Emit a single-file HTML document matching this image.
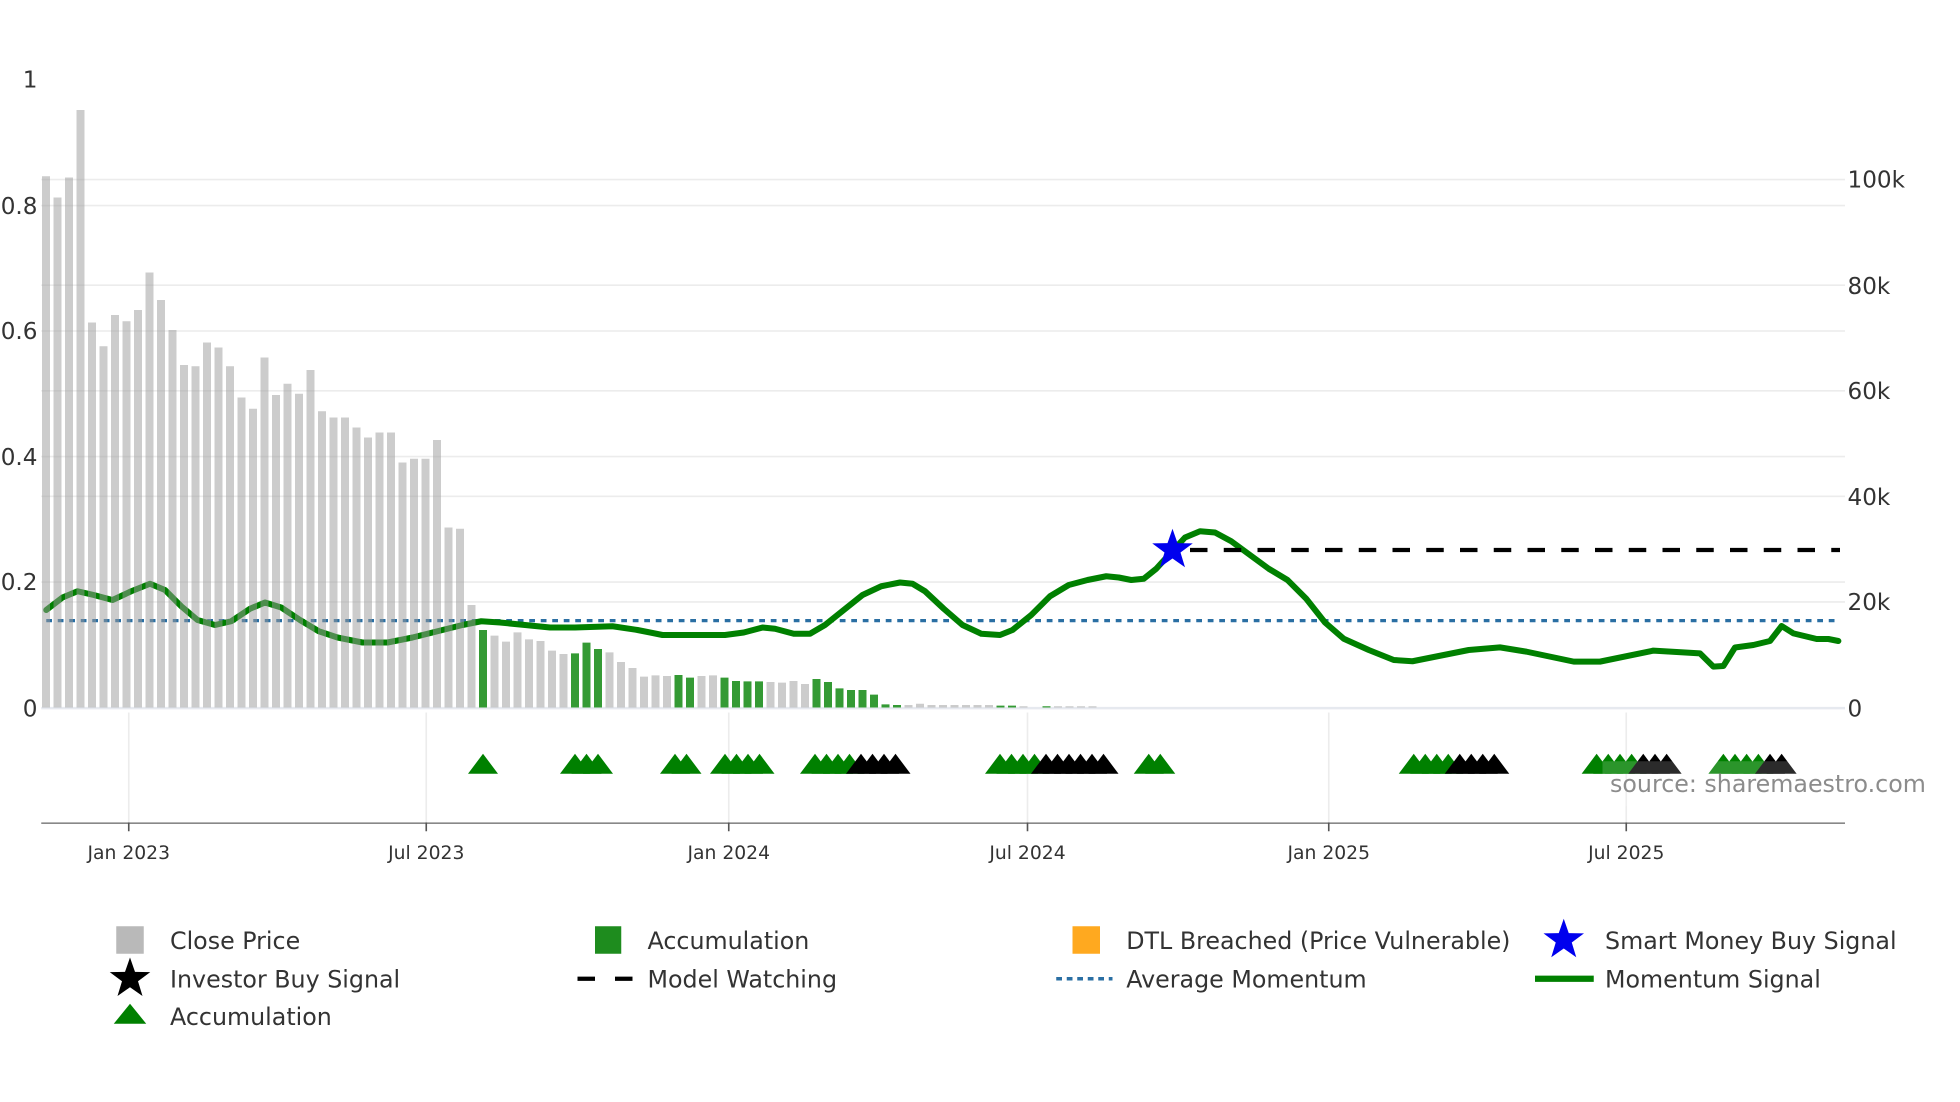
<!DOCTYPE html>
<html><head><meta charset="utf-8"><style>
html,body{margin:0;padding:0;background:#fff;width:1960px;height:1102px;overflow:hidden}
svg{display:block}
text{font-family:"DejaVu Sans","Liberation Sans",sans-serif}
</style></head><body>
<svg width="1960" height="1102" viewBox="0 0 1568 881.6" xmlns="http://www.w3.org/2000/svg">
<defs>
<polygon id="tg" points="0,-8 -12,8 12,8" fill="#008000"/>
<polygon id="tb" points="0,-8 -12,8 12,8" fill="#000"/>
</defs>
<g stroke="#ececec" stroke-width="1.3">
<line x1="33" y1="143.6" x2="1476" y2="143.6"/><line x1="33" y1="228.1" x2="1476" y2="228.1"/><line x1="33" y1="312.6" x2="1476" y2="312.6"/><line x1="33" y1="397" x2="1476" y2="397"/><line x1="33" y1="481.5" x2="1476" y2="481.5"/>
<line x1="33" y1="164.4" x2="1476" y2="164.4"/><line x1="33" y1="264.8" x2="1476" y2="264.8"/><line x1="33" y1="365.2" x2="1476" y2="365.2"/><line x1="33" y1="465.6" x2="1476" y2="465.6"/>
<line x1="103" y1="570" x2="103" y2="658"/><line x1="341" y1="570" x2="341" y2="658"/><line x1="583" y1="570" x2="583" y2="658"/><line x1="822" y1="570" x2="822" y2="658"/><line x1="1063" y1="570" x2="1063" y2="658"/><line x1="1301" y1="570" x2="1301" y2="658"/>
</g>
<line x1="33" y1="566.5" x2="1476" y2="566.5" stroke="#e6e9ef" stroke-width="2"/>
<line x1="37" y1="496.5" x2="1470" y2="496.5" stroke="#2a6fa3" stroke-width="2.6" stroke-dasharray="4.6,4.6"/>
<polyline fill="none" stroke="#008000" stroke-width="4.8" stroke-linejoin="round" stroke-linecap="round" points="37,488 50,478 62,473 75,476 90,480 105,473 120,467 132,472 145,485 158,496 172,500 185,497 200,487 212,482 225,486 240,496 255,505 270,510 290,514 310,514 330,510 350,505 370,500 385,497 400,498 420,500 440,502 460,502 490,501 510,504 530,508 560,508 580,508 595,506 610,502 620,503 635,507 648,507 660,500 675,488 690,476 705,469 720,466 730,467 740,473 755,487 770,500 785,507 800,508 810,504 825,492 840,477 855,468 870,464 885,461 895,462 905,464 915,463 925,455 935,444 948,430 960,425 972,426 985,433 1000,444 1015,455 1030,464 1045,479 1060,498 1075,511 1095,520 1115,528 1130,529 1150,525 1175,520 1200,517.9 1221,521.3 1259,529.3 1280,529.3 1322.7,520.5 1360,522.7 1370.7,533.3 1378.7,532.8 1388,518 1402.7,516 1416,512.8 1425.3,500.8 1434.7,506.7 1453.3,511.2 1462.7,511.2 1470.7,512.8"/>
<g fill="#999" fill-opacity="0.5">
<rect x="33.6" y="141" width="6.4" height="425"/><rect x="42.8" y="158" width="6.4" height="408"/><rect x="52" y="142" width="6.4" height="424"/><rect x="61.2" y="88" width="6.4" height="478"/><rect x="70.4" y="258" width="6.4" height="308"/><rect x="79.6" y="277" width="6.4" height="289"/><rect x="88.8" y="252" width="6.4" height="314"/><rect x="98" y="257" width="6.4" height="309"/><rect x="107.2" y="248" width="6.4" height="318"/><rect x="116.4" y="218" width="6.4" height="348"/><rect x="125.6" y="240" width="6.4" height="326"/><rect x="134.8" y="264" width="6.4" height="302"/><rect x="144" y="292" width="6.4" height="274"/><rect x="153.2" y="293" width="6.4" height="273"/><rect x="162.4" y="274" width="6.4" height="292"/><rect x="171.6" y="278" width="6.4" height="288"/><rect x="180.8" y="293" width="6.4" height="273"/><rect x="190" y="318" width="6.4" height="248"/><rect x="199.2" y="327" width="6.4" height="239"/><rect x="208.4" y="286" width="6.4" height="280"/><rect x="217.6" y="316" width="6.4" height="250"/><rect x="226.8" y="307" width="6.4" height="259"/><rect x="236" y="315" width="6.4" height="251"/><rect x="245.2" y="296" width="6.4" height="270"/><rect x="254.4" y="329" width="6.4" height="237"/><rect x="263.6" y="334" width="6.4" height="232"/><rect x="272.8" y="334" width="6.4" height="232"/><rect x="282" y="342" width="6.4" height="224"/><rect x="291.2" y="350" width="6.4" height="216"/><rect x="300.4" y="346" width="6.4" height="220"/><rect x="309.6" y="346" width="6.4" height="220"/><rect x="318.8" y="370" width="6.4" height="196"/><rect x="328" y="367" width="6.4" height="199"/><rect x="337.2" y="367" width="6.4" height="199"/><rect x="346.4" y="352" width="6.4" height="214"/><rect x="355.6" y="422" width="6.4" height="144"/><rect x="364.8" y="423" width="6.4" height="143"/><rect x="374" y="484" width="6.4" height="82"/>
<rect x="392.4" y="508.5" width="6.4" height="57.5"/><rect x="401.6" y="513.3" width="6.4" height="52.7"/><rect x="410.8" y="505.9" width="6.4" height="60.1"/><rect x="420" y="511.5" width="6.4" height="54.5"/><rect x="429.2" y="512.8" width="6.4" height="53.2"/><rect x="438.4" y="520.5" width="6.4" height="45.5"/><rect x="447.6" y="523.2" width="6.4" height="42.8"/>
<rect x="484.4" y="521.9" width="6.4" height="44.1"/><rect x="493.6" y="529.6" width="6.4" height="36.4"/><rect x="502.8" y="534.4" width="6.4" height="31.6"/><rect x="512" y="541.3" width="6.4" height="24.7"/><rect x="521.2" y="540.3" width="6.4" height="25.7"/><rect x="530.4" y="540.8" width="6.4" height="25.2"/>
<rect x="558" y="540.8" width="6.4" height="25.2"/><rect x="567.2" y="540.3" width="6.4" height="25.7"/>
<rect x="613.2" y="545.6" width="6.4" height="20.4"/><rect x="622.4" y="546.1" width="6.4" height="19.9"/><rect x="631.6" y="544.8" width="6.4" height="21.2"/><rect x="640.8" y="547.2" width="6.4" height="18.8"/>
<rect x="723.6" y="564" width="6.4" height="2"/><rect x="732.8" y="563" width="6.4" height="3"/><rect x="742" y="564" width="6.4" height="2"/><rect x="751.2" y="564" width="6.4" height="2"/><rect x="760.4" y="564" width="6.4" height="2"/><rect x="769.6" y="564" width="6.4" height="2"/><rect x="778.8" y="564" width="6.4" height="2"/><rect x="788" y="564" width="6.4" height="2"/><rect x="815.6" y="565" width="6.4" height="1"/><rect x="843.2" y="565" width="6.4" height="1"/><rect x="852.4" y="565" width="6.4" height="1"/><rect x="861.6" y="565" width="6.4" height="1"/><rect x="870.8" y="565" width="6.4" height="1"/>
</g>
<g fill="#349a34">
<rect x="383.2" y="504" width="6.4" height="62"/>
<rect x="456.8" y="522.7" width="6.4" height="43.3"/><rect x="466" y="514.1" width="6.4" height="51.9"/><rect x="475.2" y="519.2" width="6.4" height="46.8"/>
<rect x="539.6" y="540" width="6.4" height="26"/><rect x="548.8" y="542.1" width="6.4" height="23.9"/>
<rect x="576.4" y="542.1" width="6.4" height="23.9"/><rect x="585.6" y="544.8" width="6.4" height="21.2"/><rect x="594.8" y="545.1" width="6.4" height="20.9"/><rect x="604" y="545.1" width="6.4" height="20.9"/>
<rect x="650" y="543.2" width="6.4" height="22.8"/><rect x="659.2" y="545.6" width="6.4" height="20.4"/><rect x="668.4" y="550.7" width="6.4" height="15.3"/><rect x="677.6" y="552" width="6.4" height="14"/><rect x="686.8" y="552" width="6.4" height="14"/><rect x="696" y="555.7" width="6.4" height="10.3"/><rect x="705.2" y="563.5" width="6.4" height="2.5"/><rect x="714.4" y="564" width="6.4" height="2"/><rect x="797.2" y="564.5" width="6.4" height="1.5"/><rect x="806.4" y="564.5" width="6.4" height="1.5"/><rect x="834" y="565" width="6.4" height="1"/>
</g>
<line x1="952" y1="440" x2="1472" y2="440" stroke="#000" stroke-width="3.4" stroke-dasharray="14,13"/>
<polygon transform="translate(938,440)" fill="#0000ee" points="0,-17 4,-5.5 16.2,-5.3 6.4,2 10,13.8 0,6.8 -10,13.8 -6.4,2 -16.2,-5.3 -4,-5.5"/>
<g transform="translate(0,611)">
<use href="#tg" x="386.4"/>
<use href="#tg" x="460"/><use href="#tg" x="469.2"/><use href="#tg" x="478.4"/>
<use href="#tg" x="540"/><use href="#tg" x="549.2"/>
<use href="#tg" x="580"/><use href="#tg" x="589.2"/><use href="#tg" x="598.4"/><use href="#tg" x="607.6"/>
<use href="#tg" x="652"/><use href="#tg" x="661.2"/><use href="#tg" x="670.4"/><use href="#tg" x="679.6"/>
<use href="#tb" x="688.8"/><use href="#tb" x="698"/><use href="#tb" x="707.2"/><use href="#tb" x="716.4"/>
<use href="#tg" x="800"/><use href="#tg" x="809.2"/><use href="#tg" x="818.4"/><use href="#tg" x="827.6"/>
<use href="#tb" x="836.8"/><use href="#tb" x="846"/><use href="#tb" x="855.2"/><use href="#tb" x="864.4"/><use href="#tb" x="873.6"/><use href="#tb" x="882.8"/>
<use href="#tg" x="919"/><use href="#tg" x="928.2"/>
<use href="#tg" x="1131"/><use href="#tg" x="1140.2"/><use href="#tg" x="1149.4"/><use href="#tg" x="1158.6"/>
<use href="#tb" x="1167.8"/><use href="#tb" x="1177"/><use href="#tb" x="1186.2"/><use href="#tb" x="1195.4"/>
<use href="#tg" x="1277.3"/><use href="#tg" x="1286.6"/><use href="#tg" x="1296"/><use href="#tg" x="1305.3"/>
<use href="#tb" x="1314.6"/><use href="#tb" x="1324"/><use href="#tb" x="1333.3"/>
<use href="#tg" x="1378.7"/><use href="#tg" x="1388"/><use href="#tg" x="1397.3"/><use href="#tg" x="1406.7"/>
<use href="#tb" x="1416"/><use href="#tb" x="1425.3"/>
</g>
<rect x="1282" y="609" width="263" height="36" fill="#fff" fill-opacity="0.17"/>
<text x="1288" y="633.6" font-size="19" fill="#8c8c8c">source: sharemaestro.com</text>
<line x1="33" y1="658.5" x2="1476" y2="658.5" stroke="#888" stroke-width="1.3"/>
<g stroke="#555" stroke-width="1.3">
<line x1="103" y1="658" x2="103" y2="665"/><line x1="341" y1="658" x2="341" y2="665"/><line x1="583" y1="658" x2="583" y2="665"/><line x1="822" y1="658" x2="822" y2="665"/><line x1="1063" y1="658" x2="1063" y2="665"/><line x1="1301" y1="658" x2="1301" y2="665"/>
</g>
<g font-size="15" fill="#333" text-anchor="middle">
<text x="103" y="687">Jan 2023</text><text x="341" y="687">Jul 2023</text><text x="583" y="687">Jan 2024</text><text x="822" y="687">Jul 2024</text><text x="1063" y="687">Jan 2025</text><text x="1301" y="687">Jul 2025</text>
</g>
<g font-size="18.5" fill="#333" text-anchor="end">
<text x="30" y="70">1</text><text x="30" y="171">0.8</text><text x="30" y="271">0.6</text><text x="30" y="372">0.4</text><text x="30" y="472">0.2</text><text x="30" y="573">0</text>
</g>
<g font-size="18.5" fill="#333">
<text x="1478" y="150">100k</text><text x="1478" y="235">80k</text><text x="1478" y="319">60k</text><text x="1478" y="404">40k</text><text x="1478" y="488">20k</text><text x="1478" y="573">0</text>
</g>
<rect x="93" y="741" width="22" height="22" fill="#b9b9b9"/>
<rect x="476" y="741" width="21" height="22" fill="#1e8c1e"/>
<rect x="858" y="741" width="22" height="22" fill="#ffa91f"/>
<polygon transform="translate(1251,752)" fill="#0000ee" points="0,-17 4,-5.5 16.2,-5.3 6.4,2 10,13.8 0,6.8 -10,13.8 -6.4,2 -16.2,-5.3 -4,-5.5"/>
<polygon transform="translate(104,783)" fill="#000" points="0,-17 4,-5.5 16.2,-5.3 6.4,2 10,13.8 0,6.8 -10,13.8 -6.4,2 -16.2,-5.3 -4,-5.5"/>
<line x1="462" y1="783" x2="506" y2="783" stroke="#000" stroke-width="3.4" stroke-dasharray="14,16"/>
<line x1="845" y1="783" x2="890" y2="783" stroke="#2a6fa3" stroke-width="2.8" stroke-dasharray="4.6,3.8"/>
<line x1="1228" y1="783" x2="1275" y2="783" stroke="#008000" stroke-width="5"/>
<polygon points="104,803 91,819 117,819" fill="#008000"/>
<g font-size="19" fill="#333">
<text x="136" y="759">Close Price</text><text x="518" y="759">Accumulation</text><text x="901" y="759">DTL Breached (Price Vulnerable)</text><text x="1284" y="759">Smart Money Buy Signal</text>
<text x="136" y="790">Investor Buy Signal</text><text x="518" y="790">Model Watching</text><text x="901" y="790">Average Momentum</text><text x="1284" y="790">Momentum Signal</text>
<text x="136" y="820">Accumulation</text>
</g>
</svg>
</body></html>
